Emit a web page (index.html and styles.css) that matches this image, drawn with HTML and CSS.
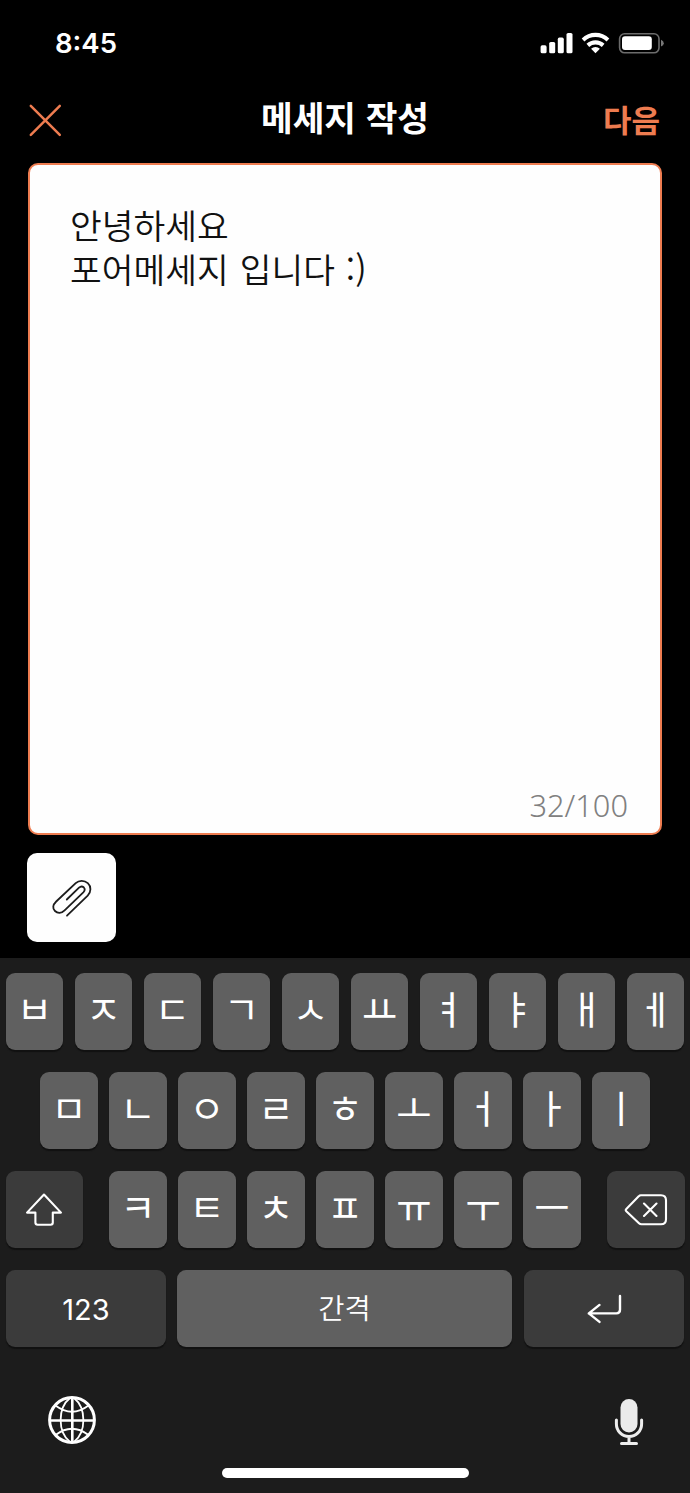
FILE: index.html
```html
<!DOCTYPE html>
<html lang="ko">
<head>
<meta charset="utf-8">
<title>메세지 작성</title>
<link rel="stylesheet" href="styles.css">
</head>
<body>
<div class="screen">
  <div class="status">
    <span class="time">8:45</span>
    <svg class="status-icons" width="124" height="24" viewBox="0 0 124 24">
      <g fill="#fff">
        <rect x="0.6" y="14.3" width="6" height="8" rx="1.6"/>
        <rect x="9.2" y="11" width="6" height="11.3" rx="1.6"/>
        <rect x="17.8" y="6.6" width="6" height="15.7" rx="1.6"/>
        <rect x="26.5" y="2" width="6" height="20.3" rx="1.6"/>
        <path d="M41.7 7.400a19.6 19.6 0 0 1 27.6 0l-2.7 3.200a16 16 0 0 0-22.2 0z"/>
        <path d="M46.5 12.800a13 13 0 0 1 18 0l-2.7 3.100a9.2 9.2 0 0 0-12.6 0z"/>
        <path d="M51.1 17.800a6.5 6.5 0 0 1 8.8 0l-4.4 4.500z"/>
        <rect x="82" y="5.2" width="29.8" height="13.8" rx="3"/>
      </g>
      <rect x="79.6" y="2.8" width="39.4" height="19" rx="5" fill="none" stroke="#6c6c6c" stroke-width="1.6"/>
      <path d="M121 8.8q2.8 1.2 2.8 3.4t-2.8 3.4z" fill="#777"/>
    </svg>
  </div>
  <header class="nav">
    <svg class="close" width="34" height="34" viewBox="0 0 34 34" fill="none" stroke="#ee7c50" stroke-width="2.5" stroke-linecap="round"><path d="M2.8 2.8 31.8 31.8M31.8 2.8 2.8 31.8"/></svg>
    <h1 class="title">메세지 작성</h1>
    <span class="next">다음</span>
  </header>
  <main class="editor">
    <p class="message">안녕하세요<br>포어메세지 입니다 :)</p>
    <span class="counter">32/100</span>
  </main>
  <div class="attach">
    <svg width="42" height="42" viewBox="0 0 42 42" fill="none" stroke="#1c1c1c" stroke-width="1.8" stroke-linecap="round" stroke-linejoin="round"><path d="M16 38.7 36.7 18.6C40.3 15 40.3 9.300 36.800 6.100C33.300 3 28 3 24.700 6.200L5.200 24.500C1.600 28 1.400 31.500 4 34C6.600 36.500 10.500 36.400 13.600 33.400L32.300 15.300C34 13.500 34 11.600 32.700 10.300C31.400 9.200 29.600 9.200 28 10.700L15.800 22.500"/></svg>
  </div>
  <section class="keyboard">
    <div class="row">
      <span class="key">ㅂ</span><span class="key">ㅈ</span><span class="key">ㄷ</span><span class="key">ㄱ</span><span class="key">ㅅ</span><span class="key">ㅛ</span><span class="key">ㅕ</span><span class="key">ㅑ</span><span class="key">ㅐ</span><span class="key">ㅔ</span>
    </div>
    <div class="row">
      <span class="key">ㅁ</span><span class="key">ㄴ</span><span class="key">ㅇ</span><span class="key">ㄹ</span><span class="key">ㅎ</span><span class="key">ㅗ</span><span class="key">ㅓ</span><span class="key">ㅏ</span><span class="key">ㅣ</span>
    </div>
    <div class="row spread">
      <span class="key dark side">
        <svg width="38" height="34" viewBox="0 0 38 34" fill="none" stroke="#fff" stroke-width="2.1" stroke-linejoin="round"><path d="M19 1.500 36 19.600H27.800V29.500Q27.800 31.700 25.600 31.700H12.600Q10.400 31.700 10.400 29.500V19.600H2Z"/></svg>
      </span>
      <span class="letters"><span class="key">ㅋ</span><span class="key">ㅌ</span><span class="key">ㅊ</span><span class="key">ㅍ</span><span class="key">ㅠ</span><span class="key">ㅜ</span><span class="key">ㅡ</span></span>
      <span class="key dark side">
        <svg width="44" height="34" viewBox="0 0 44 34" fill="none" stroke="#fff" stroke-width="2.100" stroke-linejoin="round" stroke-linecap="round"><path d="M17 2.200H37Q42 2.200 42 7.200V26.300Q42 31.300 37 31.300H17.500Q16 31.300 15 30.300L2.300 18.200Q1.200 17.100 2.300 16L14.700 3.300Q15.600 2.200 17 2.200ZM20 10.500 32.500 23M32.500 10.500 20 23"/></svg>
      </span>
    </div>
    <div class="row">
      <span class="key dark wide num">123</span>
      <span class="key space">간격</span>
      <span class="key dark wide">
        <svg width="36" height="30" viewBox="0 0 36 30" fill="none" stroke="#fff" stroke-width="2.400" stroke-linecap="round" stroke-linejoin="round"><path d="M34 2V15.800Q34 19.400 30.400 19.400H2.800M13.500 10.900 2.800 19.400 13.500 27.900"/></svg>
      </span>
    </div>
    <div class="tools">
      <svg width="48" height="48" viewBox="0 0 48 48" fill="none" stroke="#fff" stroke-width="2"><circle cx="24" cy="24" r="22.400" stroke-width="3"/><path stroke-width="2.600" d="M24.300 2V46M2 24.500H46"/><path stroke-width="1.800" d="M22 2C9.500 12 9.500 36 22 46M26 2C38.500 12 38.500 36 26 46M7.500 9.500Q24 22 40.500 9.500M7.500 39Q24 26.500 40.500 39"/></svg>
      <svg class="mic" width="30" height="48" viewBox="0 0 30 48"><rect x="6.500" y="1" width="17" height="33.500" rx="8.500" fill="#ebebeb"/><path d="M2.400 22V26A12.600 12.600 0 0 0 27.600 26V22M15 38.600V45M7.500 45.600H22.500" fill="none" stroke="#ededed" stroke-width="3" stroke-linecap="round"/></svg>
    </div>
    <div class="home"></div>
  </section>
</div>
</body>
</html>
```
FILE: styles.css
```css
* { box-sizing: border-box; }
body { margin: 0; background: #000; }
.screen {
  width: 690px;
  height: 1493px;
  display: flex;
  flex-direction: column;
  background: #000;
  color: #fff;
  font-family: "Noto Sans CJK KR", sans-serif;
  overflow: hidden;
}
.status {
  height: 84px;
  flex: none;
  display: flex;
  justify-content: space-between;
  align-items: center;
  padding: 0 26px 0 55px;
}
.time { font: 600 27.5px/34px Inter, sans-serif; padding-top: 1px; }
.status-icons { margin-top: 1px; }
.nav {
  height: 79px;
  flex: none;
  display: grid;
  grid-template-columns: 1fr auto 1fr;
  align-items: center;
  padding: 0 30px 10px 29px;
}
.close { margin: 3px 0 0 -1px; }
.title { margin: -5px 0 0 1px; font-size: 34.4px; line-height: 48px; font-weight: 700; }
.next { justify-self: end; color: #ee7c50; font-size: 31px; line-height: 44px; font-weight: 600; margin-top: 1px; }
.editor {
  width: 634px;
  height: 672px;
  flex: none;
  margin-left: 28px;
  display: flex;
  flex-direction: column;
  justify-content: space-between;
  padding: 37px 32px 6px 40px;
  background: #fefefe;
  border: 2px solid #ee7c50;
  border-radius: 10px;
}
.message { margin: 0; color: #111; font-size: 34.5px; line-height: 44px; font-weight: 350; word-spacing: 1.300px; }
.counter { align-self: flex-end; color: #808080; font: 350 30.800px/44px "Noto Sans", sans-serif; }
.attach {
  width: 89px;
  height: 89px;
  flex: none;
  margin: 18px 0 16px 27px;
  display: flex;
  align-items: center;
  justify-content: center;
  background: #fefefe;
  border-radius: 10px;
}
.keyboard {
  height: 535px;
  flex: none;
  display: flex;
  flex-direction: column;
  gap: 22.1px;
  padding: 15px 5.5px 0;
  background: #1c1c1c;
}
.row { display: flex; justify-content: center; gap: 11.3px; height: 77px; flex: none; }
.spread { justify-content: space-between; }
.letters { display: flex; gap: 11.3px; }
.key {
  width: 57.7px;
  height: 77px;
  flex: none;
  display: flex;
  align-items: center;
  justify-content: center;
  padding-bottom: 9px;
  background: #606060;
  border-radius: 9px;
  box-shadow: 0 1.500px 1px #111;
  font-size: 38.5px;
  line-height: 50px;
  font-weight: 400;
}
.dark { background: #3b3b3b; padding-bottom: 0; }
.side { width: 77.500px; }
.wide { width: 160.700px; }
.space { width: 335.5px; margin: 0 0 0 -0.8px; padding-bottom: 4px; font-size: 28.5px; font-weight: 350; }
.num { font: 400 29px/36px Inter, sans-serif; padding-top: 2px; }
.tools { display: flex; justify-content: space-between; padding: 27px 40.500px 0 42.500px; }
.mic { margin-top: 2px; }
.home { width: 247px; height: 10px; margin: 0 auto; border-radius: 5px; background: #fff; }
```
